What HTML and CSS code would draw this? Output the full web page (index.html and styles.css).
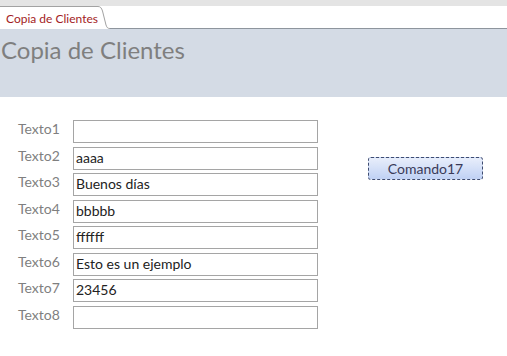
FILE: index.html
```html
<!DOCTYPE html>
<html lang="es">
<head>
    <meta charset="UTF-8">
    <title>Copia de Clientes</title>
    <link rel="stylesheet" href="styles.css">
</head>
<body>
    <div class="top-strip"></div>
    <div class="tab-bar">
        <div class="tab">Copia de Clientes</div>
        <svg class="tab-curve" width="16" height="23" viewBox="0 0 16 23">
            <path d="M0 0.5 H4 C6.5 0.5 7.5 2 8.5 5 L12 19 C13 22 14 22.5 16 22.5" fill="#fff" stroke="#a2a2a2" stroke-width="1"/>
        </svg>
        <div class="tab-fill"></div>
    </div>

    <div class="header">
        <h1>Copia de Clientes</h1>
    </div>

    <div class="form">
        <div class="fields">
            <div class="row"><span class="label">Texto1</span><div class="box"></div></div>
            <div class="row"><span class="label">Texto2</span><div class="box">aaaa</div></div>
            <div class="row"><span class="label">Texto3</span><div class="box">Buenos días</div></div>
            <div class="row"><span class="label">Texto4</span><div class="box">bbbbb</div></div>
            <div class="row"><span class="label">Texto5</span><div class="box">ffffff</div></div>
            <div class="row"><span class="label">Texto6</span><div class="box">Esto es un ejemplo</div></div>
            <div class="row"><span class="label">Texto7</span><div class="box">23456</div></div>
            <div class="row"><span class="label">Texto8</span><div class="box"></div></div>
        </div>
        <div class="actions">
            <button class="btn">Comando17</button>
        </div>
    </div>
</body>
</html>
```

FILE: styles.css
```css
* {
    margin: 0;
    padding: 0;
    box-sizing: border-box;
}

body {
    font-family: Lato, "Open Sans", sans-serif;
    background-color: #fff;
    color: #333;
}

.top-strip {
    height: 6px;
    background-color: #e4e4e4;
}

.tab-bar {
    display: flex;
    height: 23px;
    background-color: #fff;
}

.tab {
    width: 94px;
    border-top: 1px solid #a2a2a2;
    padding: 4px 0 0 6px;
    font-size: 12px;
    color: #a31c24;
    white-space: nowrap;
}

.tab-curve {
    display: block;
}

.tab-fill {
    flex: 1;
    border-bottom: 1px solid #8e959d;
}

.header {
    height: 68px;
    background-color: #d4dbe5;
    padding: 6px 0 0 1px;
}

.header h1 {
    font-weight: normal;
    font-size: 24px;
    color: #7f7f7f;
}

.form {
    display: flex;
    padding-top: 23px;
}

.fields {
    display: flex;
    flex-direction: column;
    gap: 3.5px;
}

.row {
    display: flex;
    align-items: center;
}

.label {
    width: 73px;
    padding-left: 18px;
    font-size: 14px;
    color: #7f7f7f;
    margin-top: -6px;
}

.box {
    width: 245px;
    height: 23px;
    border: 1px solid #a5a5a5;
    padding: 1px 0 0 2px;
    font-size: 14px;
    color: #222;
}

.actions {
    padding: 37px 0 0 50px;
}

.btn {
    width: 115px;
    height: 23px;
    border: 1px dashed #3f4c70;
    border-radius: 3px;
    background: linear-gradient(#e8eefb, #c0d1f4);
    font-family: Lato, "Open Sans", sans-serif;
    font-size: 14px;
    color: #3a3a58;
}
```
